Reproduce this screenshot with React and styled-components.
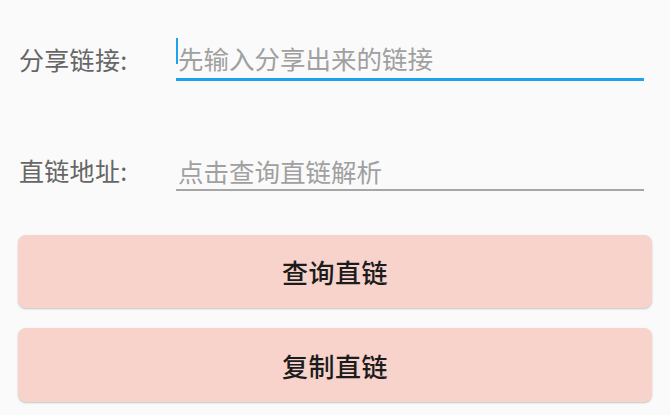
import React from "react";
import styled, { createGlobalStyle } from "styled-components";

const GlobalStyle = createGlobalStyle`
  html, body {
    margin: 0;
    padding: 0;
    background: #fafafa;
  }
  body {
    font-family: "Noto Sans CJK SC", "Noto Sans", sans-serif;
  }
`;

const Page = styled.div`
  width: 670px;
  height: 415px;
  box-sizing: border-box;
  padding: 38px 18px 0 18px;
  display: flex;
  flex-direction: column;
  overflow: hidden;
`;

const Row = styled.div`
  display: flex;
  align-items: center;
  padding-right: 8px;
  margin-top: ${(props) => props.$top || 0}px;
`;

const Label = styled.div`
  width: 157px;
  flex-shrink: 0;
  padding-left: 1px;
  font-size: 25px;
  letter-spacing: 0.3px;
  color: #666666;
  line-height: 1;
`;

const Field = styled.div`
  flex: 1;
  height: 40px;
  display: flex;
  align-items: center;
  position: relative;
  border-bottom: ${(props) => (props.$active ? "3px solid #1ba3ec" : "2px solid #a6a6a6")};
`;

const Caret = styled.span`
  position: absolute;
  left: 0;
  top: 0;
  width: 2px;
  height: 26px;
  background: #1ba3ec;
`;

const Placeholder = styled.span`
  padding-left: 2px;
  padding-top: ${(props) => (props.$shift ? 3 : 0)}px;
  font-size: 25.5px;
  letter-spacing: 0;
  color: #a0a0a0;
  line-height: 1;
`;

const Button = styled.button`
  display: flex;
  align-items: center;
  justify-content: center;
  width: 100%;
  height: ${(props) => props.$h || 73}px;
  margin-top: ${(props) => props.$top || 0}px;
  border: none;
  border-radius: 8px;
  background: #f7d3cc;
  box-shadow: 0 1px 2px rgba(0, 0, 0, 0.22);
  font-family: "Noto Sans CJK SC", "Noto Sans", sans-serif;
  font-size: 26px;
  font-weight: 500;
  letter-spacing: 0.5px;
  color: #1c1c1c;
  padding: 0;
`;

export default function App() {
  return (
    <>
      <GlobalStyle />
      <Page>
        <Row>
          <Label>分享链接:</Label>
          <Field $active>
            <Caret />
            <Placeholder>先输入分享出来的链接</Placeholder>
          </Field>
        </Row>
        <Row $top={68}>
          <Label>直链地址:</Label>
          <Field>
            <Placeholder $shift>点击查询直链解析</Placeholder>
          </Field>
        </Row>
        <Button $top={44}>查询直链</Button>
        <Button $top={20} $h={74}>复制直链</Button>
      </Page>
    </>
  );
}
